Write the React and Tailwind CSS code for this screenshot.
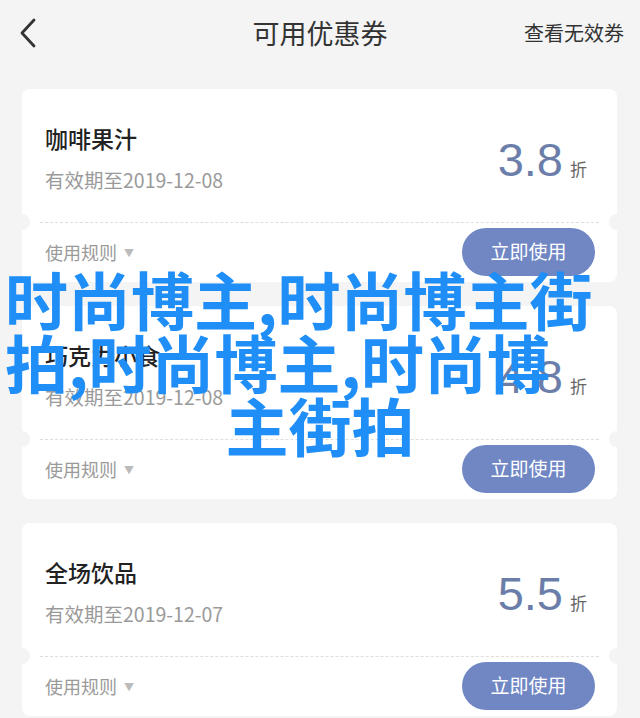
import React from "react";

const coupons = [
  { title: "咖啡果汁", date: "有效期至2019-12-08", value: "3.8" },
  { title: "巧克力小食", date: "有效期至2019-12-08", value: "4.8" },
  { title: "全场饮品", date: "有效期至2019-12-07", value: "5.5" },
];

function Coupon({ c }) {
  return (
    <div className="relative bg-white rounded-[8px] h-[193px] flex flex-col">
      <div className="h-[133px] flex justify-between pl-[23px] pr-[30px]">
        <div className="flex flex-col pt-[34px]">
          <div className="text-[23px] leading-[30px] text-[#222] font-medium">{c.title}</div>
          <div className="text-[19.5px] leading-[26px] text-[#9a9a9a] mt-[14px]">{c.date}</div>
        </div>
        <div className="flex items-baseline self-center mt-[8px]">
          <span className="text-[47px] leading-none text-[#6b7ea9] font-['Liberation_Sans',sans-serif]">{c.value}</span>
          <span className="text-[17px] text-[#666] ml-[7px]">折</span>
        </div>
      </div>
      <div className="mx-[18px] border-t border-dashed border-[#dedede]" />
      <div className="flex-1 flex items-center justify-between pl-[23px] pr-[22px]">
        <div className="flex items-center text-[18px] text-[#9a9a9a]">
          <span>使用规则</span>
          <span className="ml-[7px] text-[10px] text-[#bbb]">▼</span>
        </div>
        <button className="w-[133px] h-[48px] rounded-full bg-[#7087c4] text-white text-[19px] mt-[-2px]">
          立即使用
        </button>
      </div>
      <div className="absolute left-[-8px] top-[125px] w-[16px] h-[16px] rounded-full bg-[#f4f4f4]" />
      <div className="absolute right-[-8px] top-[125px] w-[16px] h-[16px] rounded-full bg-[#f4f4f4]" />
    </div>
  );
}

export default function App() {
  return (
    <div className="relative w-[640px] h-[718px] overflow-hidden bg-[#f4f4f4] font-['Noto_Sans_CJK_SC',sans-serif]">
      <div className="h-[66px] flex items-center justify-between px-[18px] relative">
        <svg width="18" height="30" viewBox="0 0 18 30" className="ml-[1px]">
          <path d="M15 2 L3 15 L15 28" fill="none" stroke="#333" strokeWidth="2.8" strokeLinecap="round" strokeLinejoin="round" />
        </svg>
        <div className="absolute left-0 right-0 text-center text-[27px] text-[#333] pointer-events-none">可用优惠券</div>
        <div className="text-[20px] text-[#333] mr-[-2px]">查看无效券</div>
      </div>
      <div className="flex flex-col gap-[24px] px-[22px] pt-[23px] w-[639px]">
        {coupons.map((c) => (
          <Coupon key={c.title} c={c} />
        ))}
      </div>
      <div className="absolute left-0 top-[266px] w-[640px] text-[63px] leading-[63px] font-bold text-[#1f8ef7] font-['Noto_Sans_CJK_SC',sans-serif]">
        <div className="pl-[5px] whitespace-nowrap">时尚博主,时尚博主街</div>
        <div className="pl-[5px] whitespace-nowrap">拍,时尚博主,时尚博</div>
        <div className="text-center whitespace-nowrap">主街拍</div>
      </div>
    </div>
  );
}
